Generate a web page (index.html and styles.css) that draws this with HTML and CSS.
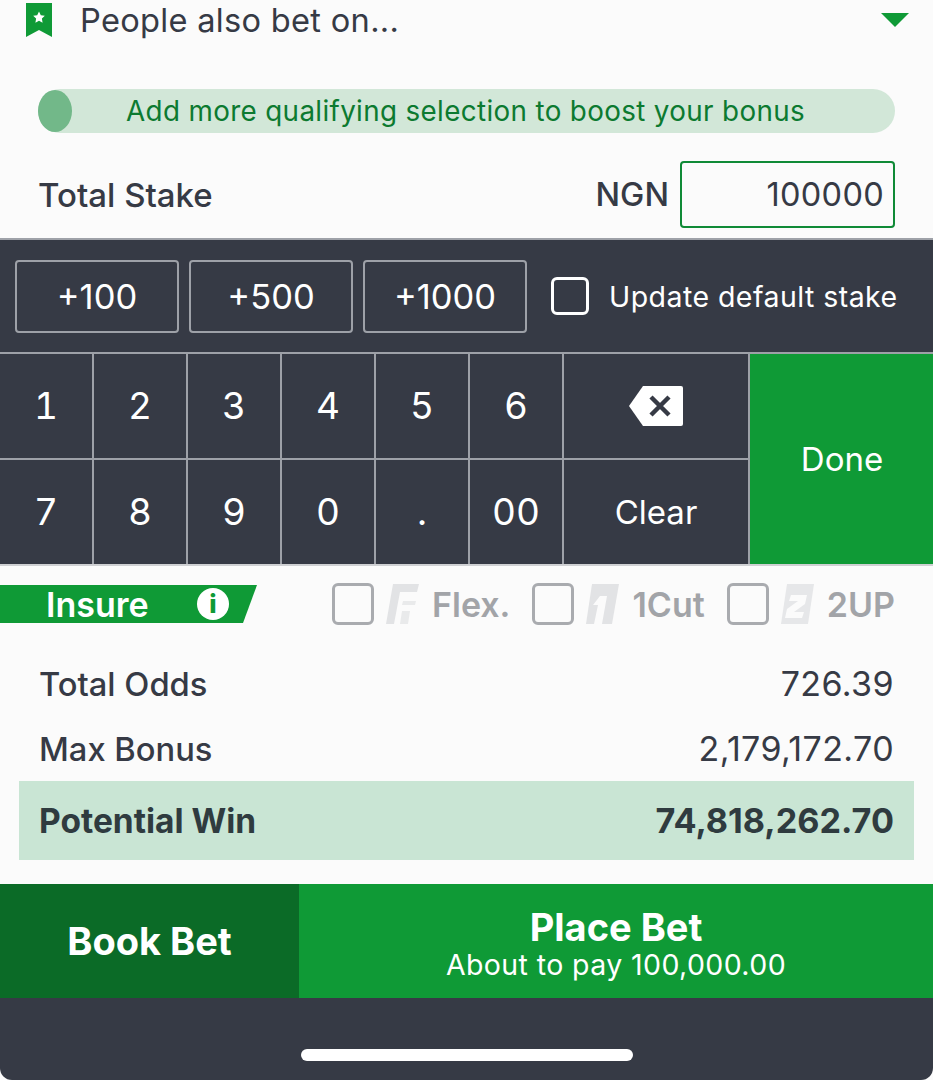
FILE: index.html
```html
<!DOCTYPE html>
<html lang="en">
<head>
    <meta charset="UTF-8">
    <meta name="viewport" content="width=device-width, initial-scale=1.0">
    <title>Bet Slip</title>
    <link rel="stylesheet" href="styles.css">
</head>
<body>
    <div class="slip">
        <div class="also-bet">
            <svg class="bookmark" viewBox="0 0 26 34" width="26" height="34">
                <path d="M0 0H26V34L13 27L0 34Z" fill="#0f9a36"/>
                <path d="M13 8.500L14.800 12.300L18.800 12.800L15.900 15.600L16.600 19.700L13 17.700L9.400 19.700L10.100 15.600L7.200 12.800L11.200 12.300Z" fill="#fff"/>
            </svg>
            <span class="also-title">People also bet on...</span>
            <svg class="caret" viewBox="0 0 28 14" width="28" height="14"><path d="M0 0H28L14 14Z" fill="#0f9a36"/></svg>
        </div>

        <div class="bonus-bar">
            <span class="bonus-knob"></span>
            <span class="bonus-text">Add more qualifying selection to boost your bonus</span>
        </div>

        <div class="stake-row">
            <span class="stake-label">Total Stake</span>
            <span class="currency">NGN</span>
            <div class="stake-input">100000</div>
        </div>

        <div class="keyboard">
            <div class="quick-row">
                <button class="quick-btn">+100</button>
                <button class="quick-btn">+500</button>
                <button class="quick-btn">+1000</button>
                <span class="check check-light"></span>
                <span class="default-label">Update default stake</span>
            </div>
            <div class="keypad">
                <div class="key">1</div>
                <div class="key">2</div>
                <div class="key">3</div>
                <div class="key">4</div>
                <div class="key">5</div>
                <div class="key">6</div>
                <div class="key key-wide">
                    <svg viewBox="0 0 56 42" width="56" height="42">
                        <path d="M15 1H53Q55 1 55 3V39Q55 41 53 41H15L1 21Z" fill="#fff"/>
                        <path d="M23 12L41 30M41 12L23 30" stroke="#363a45" stroke-width="4.500" fill="none"/>
                    </svg>
                </div>
                <div class="key key-done">Done</div>
                <div class="key">7</div>
                <div class="key">8</div>
                <div class="key">9</div>
                <div class="key">0</div>
                <div class="key">.</div>
                <div class="key">00</div>
                <div class="key key-wide key-clear">Clear</div>
            </div>
        </div>

        <div class="insure-row">
            <div class="insure-tag">
                <span class="insure-text">Insure</span>
                <span class="info-icon">i</span>
            </div>
            <div class="insure-options">
                <span class="check"></span>
                <svg class="opt-logo" viewBox="0 0 33 40" width="33" height="40">
                    <path d="M7 0H33L31 8H14L8 40H0Z" fill="#e2e3e5"/>
                    <path d="M17 17H30L29 21H16ZM16 27H24L22 40H14Z" fill="#e9eaeb"/>
                </svg>
                <span class="opt-label opt-flex">Flex.</span>
                <span class="check"></span>
                <svg class="opt-logo" viewBox="0 0 33 40" width="33" height="40">
                    <path d="M6 0H33L26 40H0Z" fill="#e2e3e5"/>
                    <path d="M14 12H21L16 40H8L12 21H7Z" fill="#fbfbfb"/>
                </svg>
                <span class="opt-label opt-cut">1Cut</span>
                <span class="check"></span>
                <svg class="opt-logo" viewBox="0 0 33 40" width="33" height="40">
                    <path d="M6 0H33L27 40H0Z" fill="#e6e7e9"/>
                    <path d="M10 11H26L24 20L13 28H23L21 34H4L6 25L17 17H8Z" fill="#fbfbfb"/>
                </svg>
                <span class="opt-label">2UP</span>
            </div>
        </div>

        <div class="summary-row">
            <span>Total Odds</span>
            <span class="summary-value">726.39</span>
        </div>
        <div class="summary-row">
            <span>Max Bonus</span>
            <span class="summary-value">2,179,172.70</span>
        </div>
        <div class="win-row">
            <span>Potential Win</span>
            <span class="win-value">74,818,262.70</span>
        </div>

        <div class="actions">
            <div class="book-btn">Book Bet</div>
            <div class="place-btn">
                <div class="place-title">Place Bet</div>
                <div class="place-sub">About to pay 100,000.00</div>
            </div>
        </div>

        <div class="home-area">
            <span class="home-bar"></span>
        </div>
    </div>
</body>
</html>
```

FILE: styles.css
```css
html, body {
    margin: 0;
    padding: 0;
    background-color: #fbfbfb;
}
.slip {
    width: 933px;
    height: 1080px;
    overflow: hidden;
    font-family: 'Inter', 'Liberation Sans', sans-serif;
    color: #363a45;
    background-color: #fbfbfb;
}

/* top row */
.also-bet {
    height: 89px;
    box-sizing: border-box;
    display: flex;
    align-items: flex-start;
    padding: 3px 24px 0 26px;
}
.bookmark {
    flex: none;
}
.also-title {
    flex: 1;
    margin-left: 28px;
    margin-top: -4px;
    font-size: 32.600px;
    line-height: 42px;
    letter-spacing: 0.3px;
}
.caret {
    flex: none;
    margin-top: 10px;
}

/* bonus bar */
.bonus-bar {
    margin: 0 38px;
    height: 44px;
    border-radius: 22px;
    background-color: #d2e7d8;
    display: flex;
    align-items: center;
}
.bonus-knob {
    flex: none;
    width: 34px;
    height: 42px;
    border-radius: 50%;
    background-color: #72b889;
}
.bonus-text {
    flex: 1;
    margin-left: 54px;
    font-size: 27.800px;
    letter-spacing: 0.35px;
    color: #0c7a30;
    white-space: nowrap;
}

/* stake */
.stake-row {
    height: 77px;
    margin-top: 28px;
    padding: 0 38px;
    display: flex;
    align-items: flex-start;
}
.stake-label {
    flex: 1;
    font-size: 33px;
    line-height: 68px;
    font-weight: 500;
}
.currency {
    font-size: 32.500px;
    line-height: 68px;
    font-weight: 500;
    margin-right: 11px;
}
.stake-input {
    width: 215px;
    height: 67px;
    box-sizing: border-box;
    border: 2px solid #0f8a36;
    border-radius: 4px;
    padding-right: 9px;
    text-align: right;
    font-size: 32.500px;
    line-height: 63px;
    letter-spacing: 0.3px;
}

/* keyboard */
.keyboard {
    border-top: 2px solid #9ea1a8;
    background-color: #363a45;
    color: #fff;
}
.quick-row {
    height: 112px;
    box-sizing: border-box;
    padding: 20px 0 0 15px;
    display: flex;
    align-items: flex-start;
}
.quick-btn {
    width: 164px;
    height: 73px;
    margin-right: 10px;
    box-sizing: border-box;
    background: none;
    border: 2px solid #9ea1a8;
    border-radius: 4px;
    color: #fff;
    font-family: inherit;
    font-size: 34.500px;
    padding: 0;
}
.check {
    flex: none;
    display: block;
    width: 42px;
    height: 42px;
    box-sizing: border-box;
    border: 3px solid #a9abaf;
    border-radius: 6px;
}
.check-light {
    width: 38px;
    height: 38px;
    margin: 17px 0 0 14px;
    border-color: #fff;
}
.default-label {
    margin-left: 20px;
    font-size: 28.500px;
    line-height: 73px;
    letter-spacing: 0.45px;
    white-space: nowrap;
}
.keypad {
    display: grid;
    grid-template-columns: repeat(6, 94px) 186px 184px;
    grid-template-rows: 106px 106px;
}
.key {
    display: flex;
    align-items: center;
    justify-content: center;
    box-sizing: border-box;
    border-top: 2px solid #9ea1a8;
    border-right: 2px solid #9ea1a8;
    font-size: 37px;
    font-variant-numeric: tabular-nums;
    padding-bottom: 1px;
}
.key-clear {
    font-size: 33px;
}
.key-done {
    grid-column: 8;
    grid-row: 1 / span 2;
    background-color: #0f9a36;
    border-right: none;
    font-size: 33px;
}

/* insure */
.insure-row {
    height: 85px;
    display: flex;
    align-items: flex-start;
    border-top: 2px solid #cfd0d3;
}
.insure-tag {
    width: 257px;
    height: 38px;
    margin-top: 19px;
    flex: none;
    display: flex;
    align-items: center;
    background-color: #0f9a36;
    clip-path: polygon(0 0, 100% 0, 243px 100%, 0 100%);
    color: #fff;
}
.insure-text {
    margin-left: 46px;
    font-size: 34px;
    font-weight: 600;
    width: 151px;
}
.info-icon {
    width: 32px;
    height: 32px;
    border-radius: 50%;
    background-color: #fff;
    color: #0f9a36;
    text-align: center;
    font-size: 26px;
    font-weight: 800;
    line-height: 32px;
}
.insure-options {
    display: flex;
    align-items: center;
    margin: 17px 0 0 75px;
    height: 42px;
}
.opt-logo {
    flex: none;
    margin-left: 12px;
}
.opt-label {
    margin-left: 13px;
    font-size: 34px;
    font-weight: 600;
    color: #a2a4a8;
}
.opt-flex, .opt-cut {
    margin-right: 22px;
}

/* totals */
.summary-row {
    height: 65px;
    padding: 0 39px;
    display: flex;
    justify-content: space-between;
    align-items: center;
    font-size: 32.700px;
}
.summary-row span:first-child {
    font-weight: 500;
}
.summary-value {
    font-size: 34px;
    letter-spacing: 0.4px;
}
.win-row {
    margin: 0 19px;
    height: 79px;
    padding: 0 20px;
    display: flex;
    justify-content: space-between;
    align-items: center;
    background-color: #c9e5d4;
    font-size: 33.500px;
    font-weight: 700;
    color: #2f3b3f;
}
.win-value {
    font-size: 34.200px;
}

/* bottom */
.actions {
    margin-top: 24px;
    height: 114px;
    display: flex;
    color: #fff;
}
.book-btn {
    width: 299px;
    display: flex;
    align-items: center;
    justify-content: center;
    background-color: #0b6b27;
    font-size: 38px;
    font-weight: 700;
}
.place-btn {
    flex: 1;
    background-color: #0f9a36;
    text-align: center;
    padding-top: 22px;
    box-sizing: border-box;
}
.place-title {
    font-size: 38px;
    font-weight: 700;
    line-height: 42px;
}
.place-sub {
    font-size: 28.500px;
    line-height: 34px;
    letter-spacing: 0.4px;
}
.home-area {
    height: 82px;
    background-color: #363a45;
    border-radius: 0 0 12px 12px;
    display: flex;
    justify-content: center;
    padding-top: 51px;
    box-sizing: border-box;
}
.home-bar {
    width: 332px;
    height: 12px;
    border-radius: 6px;
    background-color: #fff;
}
```
